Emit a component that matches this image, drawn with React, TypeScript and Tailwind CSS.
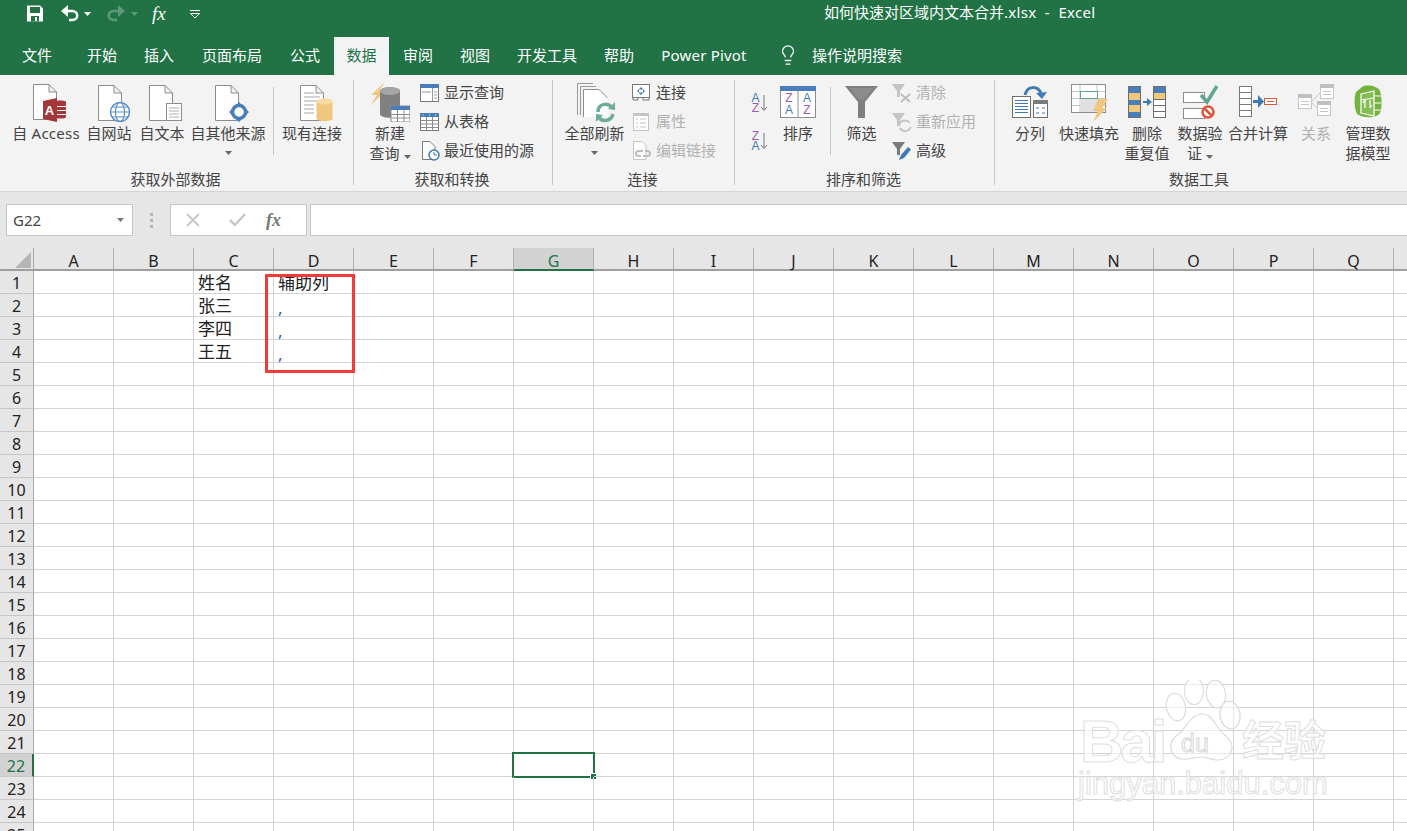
import React from 'react';
import { Lightbulb } from 'lucide-react';

const Page = ({ x = 0, y = 0, w = 24, h = 36, fill = '#fff', stroke = '#8c8c8c' }: { x?: number; y?: number; w?: number; h?: number; fill?: string; stroke?: string }) => (
  <path
    d={`M${x + 0.5} ${y + 0.5}H${x + w - 8}L${x + w - 0.5} ${y + 8}V${y + h - 0.5}H${x + 0.5}Z M${x + w - 8} ${y + 0.5}V${y + 8}H${x + w - 0.5}`}
    fill={fill}
    stroke={stroke}
  />
);

const Caret = ({ color = '#666' }: { color?: string }) => (
  <svg width="7" height="4" viewBox="0 0 7 4" className="inline-block">
    <path d="M0 0H7L3.5 4Z" fill={color} />
  </svg>
);

/* big ribbon icons: all 38px tall, drawn from y=84 of the page */
const AccessIcon = () => (
  <svg width="34" height="38" viewBox="0 0 34 38">
    <Page />
    <path d="M22 18C22 16 33 16 33 18V33C33 35 22 35 22 33Z" fill="#a4373a" />
    <path d="M23 22.5H33M23 26.5H33M23 30.5H33" stroke="#fff" />
    <path d="M10 17L24 14V38L10 35Z" fill="#a4373a" />
    <text x="16.5" y="31" fontSize="13" fontWeight="700" fill="#fff" textAnchor="middle" fontFamily="Liberation Sans">A</text>
  </svg>
);

const WebIcon = () => (
  <svg width="32" height="38" viewBox="0 0 32 38">
    <Page y={1} />
    <circle cx="22" cy="28" r="9.5" fill="#fff" stroke="#5b8fc9" strokeWidth="1.5" />
    <ellipse cx="22" cy="28" rx="4.5" ry="9.5" fill="none" stroke="#5b8fc9" strokeWidth="1.2" />
    <path d="M12.5 28H31.5M14 23H30M14 33H30" stroke="#5b8fc9" strokeWidth="1.2" />
  </svg>
);

const TextIcon = () => (
  <svg width="33" height="38" viewBox="0 0 33 38">
    <Page y={1} />
    <rect x="17.5" y="19.5" width="15" height="17" fill="#fff" stroke="#8c8c8c" />
    <path d="M20 24H30M20 27H30M20 30H30M20 33H30" stroke="#b0b0b0" />
  </svg>
);

const OtherIcon = () => (
  <svg width="34" height="38" viewBox="0 0 34 38">
    <Page y={1} />
    <circle cx="24" cy="28" r="6.5" fill="#fff" stroke="#4a7ebb" strokeWidth="3.5" />
    <path d="M24 18L27 21H21ZM24 38L27 35H21ZM14 28L17 25V31ZM34 28L31 25V31Z" fill="#4a7ebb" />
  </svg>
);

const ExistingIcon = () => (
  <svg width="33" height="38" viewBox="0 0 33 38">
    <Page y={1} />
    <path d="M4 9H14M4 13H20M4 17H20M4 21H14M4 25H14M4 29H14" stroke="#a8a8a8" />
    <path d="M16.500 17.500C16.500 14 32.500 14 32.500 17.500V34.500C32.500 38 16.500 38 16.500 34.500Z" fill="#f0c77e" />
    <ellipse cx="24.500" cy="17.500" rx="8" ry="3" fill="#f7dca6" />
  </svg>
);

const QueryIcon = () => (
  <svg width="40" height="40" viewBox="0 0 40 40">
    <path d="M15 0L1 13L7 13L0 24L14 10L9 9Z" fill="#f0c77e" />
    <path d="M10 9C10 4 30 4 30 9V32C30 37 10 37 10 32Z" fill="#808080" />
    <ellipse cx="20" cy="9" rx="10" ry="4" fill="#a6a6a6" />
    <rect x="21" y="24" width="19" height="16" fill="#fff" stroke="#8c8c8c" />
    <rect x="21" y="24" width="19" height="4" fill="#4a7ebb" />
    <path d="M21 32.500H40M21 36H40M27.500 28V40M34 28V40" stroke="#8c8c8c" />
  </svg>
);

const RefreshIcon = () => (
  <svg width="39" height="40" viewBox="0 0 39 40">
    <path d="M.5 32V.5H16" fill="none" stroke="#9a9a9a" />
    <path d="M3.500 32V3.500H19" fill="none" stroke="#9a9a9a" />
    <path d="M6.500 34V6.500H22L30.500 15V34Z" fill="#fff" />
    <path d="M6.500 34V6.500H22L30.500 15" fill="none" stroke="#8c8c8c" />
    <g transform="translate(0 3)">
      <path d="M21 26C21 17 32 16 35 22M36 28C34 36 24 36 22 31" fill="none" stroke="#6fae95" strokeWidth="3.500" />
      <path d="M31 23L38 24V16ZM26 29L19 28V36Z" fill="#6fae95" />
    </g>
  </svg>
);

const SortIcon = () => (
  <svg width="36" height="38" viewBox="0 0 36 38" fontFamily="Liberation Sans">
    <rect x="0.500" y="2.500" width="35" height="31" fill="#fff" stroke="#8c8c8c" />
    <rect x="0" y="2" width="36" height="5" fill="#4a7ebb" />
    <path d="M18 7V33" stroke="#8c8c8c" />
    <text x="9" y="18" fontSize="12" fill="#9a5cb4" textAnchor="middle">Z</text>
    <text x="9" y="30" fontSize="12" fill="#3f7ab5" textAnchor="middle">A</text>
    <text x="27" y="18" fontSize="12" fill="#3f7ab5" textAnchor="middle">A</text>
    <text x="27" y="30" fontSize="12" fill="#9a5cb4" textAnchor="middle">Z</text>
  </svg>
);

const FunnelIcon = () => (
  <svg width="33" height="38" viewBox="0 0 33 38">
    <path d="M0 2H33L20 18V34H13V18Z" fill="#808080" />
    <path d="M5 4H28L18 16H15Z" fill="#8c8c8c" />
  </svg>
);

const SplitIcon = () => (
  <svg width="37" height="38" viewBox="0 0 37 38">
    <path d="M13 11C15 2 25 1 29 9" fill="none" stroke="#3f7ab5" strokeWidth="3" />
    <path d="M24 9L35 8L30 15Z" fill="#3f7ab5" />
    <rect x="0.500" y="12.500" width="18" height="21" fill="#fff" stroke="#6d6d6d" />
    <path d="M3 16.500H16M3 19.500H16M3 22.500H16M3 25.500H16M3 28.500H16" stroke="#3f7ab5" />
    <rect x="21.500" y="16.500" width="14" height="17" fill="#fff" stroke="#6d6d6d" />
    <rect x="21" y="16" width="15" height="4" fill="#7a7a7a" />
    <path d="M24 24H27M30 24H33M24 29H27M30 29H33" stroke="#3f7ab5" />
  </svg>
);

const FlashIcon = () => (
  <svg width="37" height="38" viewBox="0 0 37 38">
    <rect x="0.500" y="0.500" width="34" height="28" fill="#fff" stroke="#8c8c8c" />
    <path d="M9 1V28M26 1V28M1 7.500H34M1 14.500H34M1 21.500H34" stroke="#c6c6c6" />
    <rect x="9.500" y="7.500" width="17" height="7" fill="#fff" stroke="#5fa68a" />
    <rect x="9.500" y="15" width="16" height="13" fill="#e0e0e0" />
    <path d="M27 15H37L31 24H36L22 38L27 27H22Z" fill="#f0c77e" />
  </svg>
);

const DedupIcon = () => (
  <svg width="38" height="38" viewBox="0 0 38 38">
    <rect x="0.500" y="2.500" width="12" height="31" fill="#4a7ebb" stroke="#6d6d6d" />
    <rect x="1" y="9" width="11" height="7" fill="#f0c77e" />
    <rect x="1" y="21" width="11" height="7" fill="#f0c77e" />
    <rect x="25.500" y="2.500" width="12" height="31" fill="#fff" stroke="#6d6d6d" />
    <rect x="26" y="3" width="11" height="6" fill="#4a7ebb" />
    <rect x="26" y="9" width="11" height="6" fill="#f0c77e" />
    <path d="M26 15.500H37M26 21.500H37M26 27.500H37" stroke="#6d6d6d" />
    <path d="M15 18H20" stroke="#3f7ab5" strokeWidth="2" />
    <path d="M19 14L24 18L19 22Z" fill="#3f7ab5" />
  </svg>
);

const ValidateIcon = () => (
  <svg width="35" height="38" viewBox="0 0 35 38">
    <rect x="0.500" y="8.500" width="21" height="10" fill="#fff" stroke="#8c8c8c" />
    <rect x="0.500" y="24.500" width="21" height="10" fill="#fff" stroke="#8c8c8c" />
    <path d="M18 11L24 18L34 2" fill="none" stroke="#5fa68a" strokeWidth="3.500" />
    <circle cx="25" cy="28" r="5.500" fill="#fff" stroke="#d9583b" strokeWidth="2.500" />
    <path d="M21 24L29 32" stroke="#d9583b" strokeWidth="2.500" />
  </svg>
);

const ConsolidateIcon = () => (
  <svg width="38" height="38" viewBox="0 0 38 38">
    <rect x="0.500" y="2.500" width="12" height="30" fill="#fff" stroke="#7a7a7a" />
    <path d="M1 8.500H12M1 14.500H12M1 20.500H12M1 26.500H12" stroke="#7a7a7a" />
    <path d="M14 17.500H21" stroke="#3f7ab5" strokeWidth="3" />
    <path d="M19 11L25 17.500L19 24Z" fill="#3f7ab5" />
    <rect x="25.500" y="14.500" width="12" height="6" fill="#fff" stroke="#d9583b" />
    <path d="M28 17.500H35" stroke="#d9583b" />
  </svg>
);

const RelationIcon = () => (
  <svg width="36" height="38" viewBox="0 0 36 38">
    <path d="M13 18L23 8M13 18L22 27" stroke="#c6c6c6" />
    <g fill="#fff" stroke="#c8c4c8">
      <rect x="0.500" y="10.500" width="13" height="14" />
      <rect x="22.500" y="0.500" width="13" height="14" />
      <rect x="19.500" y="17.500" width="13" height="14" />
    </g>
    <g fill="#c2bec2">
      <rect x="0" y="10" width="14" height="4" />
      <rect x="22" y="0" width="14" height="4" />
      <rect x="19" y="17" width="14" height="4" />
    </g>
    <path d="M3 17.500H11M3 20.500H11M25 7.500H33M25 10.500H33M22 24.500H30M22 27.500H30" stroke="#c8c4c8" />
  </svg>
);

const ModelIcon = () => (
  <svg width="28" height="38" viewBox="0 0 28 38">
    <path d="M8 3C12 0 24 2 26 7C28 14 28 24 26 29C22 35 8 34 3 30C0 25 0 12 2 8Z" fill="#74b33e" />
    <path d="M7 10L20 7V32L7 29Z" fill="#fff" fillOpacity="0.12" stroke="#fff" strokeWidth="1.200" />
    <path d="M20 12H27M20 19H27M20 26H27M7 16L20 14" stroke="#fff" />
    <path d="M11 16V24M11 16L9 19M16 24V16M16 24L18 21" fill="none" stroke="#fff" strokeWidth="1.200" />
  </svg>
);

/* small ribbon icons, 20x20 */
const ShowQueryIcon = () => (
  <svg width="20" height="20" viewBox="0 0 20 20">
    <rect x="0.500" y="1.500" width="18" height="17" fill="#fff" stroke="#7a7a7a" />
    <rect x="0" y="1" width="19" height="4" fill="#4a7ebb" />
    <path d="M12.500 5V18M2 9H11M14 9H17M14 12H17M14 15H17" stroke="#9a9a9a" />
  </svg>
);

const FromTableIcon = () => (
  <svg width="20" height="20" viewBox="0 0 20 20">
    <rect x="0.500" y="1.500" width="18" height="17" fill="#fff" stroke="#7a7a7a" />
    <rect x="0" y="1" width="19" height="4" fill="#4a7ebb" />
    <path d="M1 8.500H18M1 12H18M1 15.500H18M6.500 5V18M12.500 5V18" stroke="#8c8c8c" />
    <path d="M3 2.500V3.500M9.500 2.500V3.500M15.500 2.500V3.500" stroke="#fff" />
  </svg>
);

const RecentIcon = () => (
  <svg width="20" height="20" viewBox="0 0 20 20">
    <path d="M2.500 .5H10L15 5.500V18.500H2.500Z" fill="#fff" stroke="#7a7a7a" />
    <circle cx="14" cy="14" r="5" fill="#fff" stroke="#3f7ab5" strokeWidth="1.500" />
    <path d="M14 11V14H17" fill="none" stroke="#3f7ab5" />
  </svg>
);

const ConnIcon = () => (
  <svg width="20" height="20" viewBox="0 0 20 20">
    <rect x="0.500" y="1.500" width="17" height="13" fill="#fff" stroke="#7a7a7a" />
    <path d="M9 4L11.500 6.500H6.500ZM9 12L11.500 9.500H6.500ZM5 8L7 6V10ZM13 8L11 6V10Z" fill="#4a7ebb" />
    <path d="M1 15V17H6V15M11 15V17H17V15" fill="none" stroke="#7a7a7a" />
  </svg>
);

const PropsIcon = () => (
  <svg width="20" height="20" viewBox="0 0 20 20">
    <rect x="1.500" y="1.500" width="15" height="17" fill="#fff" stroke="#c4c4c4" />
    <rect x="1" y="1" width="16" height="3" fill="#c4c4c4" />
    <path d="M4 7H6M8 7H14M4 11H6M8 11H14M4 15H6M8 15H14" stroke="#c4c4c4" />
  </svg>
);

const EditLinkIcon = () => (
  <svg width="20" height="20" viewBox="0 0 20 20">
    <path d="M1.500 .5H10L14 4.500V18.500H1.500Z" fill="#fff" stroke="#c4c4c4" />
    <path d="M9 15H6.500A2.500 2.500 0 0 1 6.500 10H11M11 15H15.500A2.500 2.500 0 0 0 15.500 10H13" fill="none" stroke="#bdbdbd" strokeWidth="2" />
  </svg>
);

const SortSmall = ({ top, bottom, topColor, bottomColor }: { top: string; bottom: string; topColor: string; bottomColor: string }) => (
  <svg width="18" height="20" viewBox="0 0 18 20" fontFamily="Liberation Sans" fontWeight="400" className="overflow-visible">
    <text x="5.500" y="9" fontSize="12" fill={topColor} textAnchor="middle">{top}</text>
    <text x="5.500" y="19" fontSize="12" fill={bottomColor} textAnchor="middle">{bottom}</text>
    <path d="M14 2V17M11 14L14 17.500L17 14" fill="none" stroke="#777" />
  </svg>
);

const SmallFunnel = ({ color = '#c4c4c4' }: { color?: string }) => (
  <path d="M0 1H13L8 8V14H5V8Z" fill={color} />
);

const ClearIcon = () => (
  <svg width="20" height="20" viewBox="0 0 20 20">
    <SmallFunnel />
    <path d="M9 11L18 19M18 11L9 19" stroke="#bdbdbd" strokeWidth="2" />
  </svg>
);

const ReapplyIcon = () => (
  <svg width="20" height="20" viewBox="0 0 20 20">
    <SmallFunnel />
    <path d="M7 14C7 8 15 7 18 11M19 15C17 20 10 20 8 16" fill="none" stroke="#c4c4c4" strokeWidth="2" />
  </svg>
);

const AdvancedIcon = () => (
  <svg width="20" height="20" viewBox="0 0 20 20">
    <SmallFunnel color="#7a7a7a" />
    <path d="M7 19L9 14L16 6L19 8.500L12 17Z" fill="#3f7ab5" />
  </svg>
);

const BigButton = ({ w, icon, lines, caret, disabled, iconClass = '' }: { w: string; icon: React.ReactNode; lines: string[]; caret?: 'inline' | 'below'; disabled?: boolean; iconClass?: string }) => (
  <div className={`flex shrink-0 flex-col items-center pt-[9px] ${w}`}>
    <div className={`flex h-[39px] items-start justify-center ${iconClass}`}>{icon}</div>
    {lines.map((line, i) => (
      <div key={line} className={`whitespace-nowrap leading-[20px] ${disabled ? 'text-[#b1b1b1]' : 'text-[#444]'}`}>
        {line}
        {caret === 'inline' && i === lines.length - 1 && (
          <span className="ml-[4px] align-middle">
            <Caret />
          </span>
        )}
      </div>
    ))}
    {caret === 'below' && (
      <div className="flex h-[20px] items-center">
        <Caret />
      </div>
    )}
  </div>
);

const SmallButton = ({ icon, label, disabled }: { icon: React.ReactNode; label: string; disabled?: boolean }) => (
  <div className="flex h-[29px] items-center gap-[4px]">
    <div className="flex w-[20px] justify-center">{icon}</div>
    <span className={`whitespace-nowrap ${disabled ? 'text-[#b1b1b1]' : 'text-[#444]'}`}>{label}</span>
  </div>
);

const Group = ({ w, label, children, last }: { w: string; label: string; children: React.ReactNode; last?: boolean }) => (
  <div className={`flex shrink-0 ${w}`}>
    <div className="flex min-w-0 flex-1 flex-col">
      <div className="flex h-[94px]">{children}</div>
      <div className={`h-[20px] text-center leading-[20px] text-[#444] ${last ? 'pr-[4px]' : 'pr-[2px]'}`}>{label}</div>
    </div>
    {!last && <div className="mt-[5px] h-[105px] w-px bg-[#c6c6c6]" />}
  </div>
);

const tabs = [
  { label: '文件', w: 'w-[74px]' },
  { label: '开始', w: 'w-[56px]' },
  { label: '插入', w: 'w-[58px]' },
  { label: '页面布局', w: 'w-[88px]' },
  { label: '公式', w: 'w-[58px]' },
  { label: '数据', w: 'w-[55px]', active: true },
  { label: '审阅', w: 'w-[58px]' },
  { label: '视图', w: 'w-[56px]' },
  { label: '开发工具', w: 'w-[88px]' },
  { label: '帮助', w: 'w-[56px]' },
  { label: 'Power Pivot', w: 'w-[114px] tracking-[0.2px]' },
];

const columns = 'ABCDEFGHIJKLMNOPQ'.split('');
const rows = Array.from({ length: 25 }, (_, i) => i + 1);
const cells: Record<string, string> = {
  C1: '姓名',
  D1: '辅助列',
  C2: '张三',
  C3: '李四',
  C4: '王五',
  D2: ',',
  D3: ',',
  D4: ',',
};

const Watermark = () => (
  <div className="pointer-events-none absolute left-[1078px] top-[432px] h-[125px] w-[256px] font-['Liberation_Sans',sans-serif]">
    <span className="absolute left-[2px] top-[27px] text-[60px] font-bold leading-[70px] tracking-[-3px] text-white/60 [-webkit-text-stroke:1px_#dedede]">Bai</span>
    <svg width="78" height="82" viewBox="0 0 78 82" className="absolute left-[86px] top-0">
      <g fill="#ffffff" fillOpacity="0.5" stroke="#dcdcdc" strokeWidth="1.200">
        <ellipse cx="12" cy="27" rx="9.500" ry="14" transform="rotate(-12 12 27)" />
        <ellipse cx="30" cy="11" rx="9.500" ry="13.500" />
        <ellipse cx="52" cy="14" rx="9.500" ry="14" transform="rotate(-8 52 14)" />
        <ellipse cx="66" cy="35" rx="10" ry="14" transform="rotate(-8 66 35)" />
        <path d="M38 34C50 34 52 50 62 56C74 66 66 80 54 80C46 80 44 77 38 77C30 77 26 80 18 79C6 77 3 64 12 56C22 50 26 34 38 34Z" />
      </g>
    </svg>
    <span className="absolute left-[103px] top-[48px] text-[25px] leading-[30px] text-white/60 [-webkit-text-stroke:1px_#d4d4d4]">du</span>
    <span className="absolute left-[164px] top-[30px] font-['Noto_Sans_CJK_SC',sans-serif] text-[42px] font-bold leading-[56px] text-white/60 [-webkit-text-stroke:1px_#dedede]">经验</span>
    <span className="absolute left-0 top-[86px] text-[31px] leading-[36px] text-white/60 [-webkit-text-stroke:1px_#e0e0e0]">jingyan.baidu.com</span>
  </div>
);

export default function App() {
  return (
    <div className="flex h-screen w-full flex-col overflow-hidden bg-white font-['Noto_Sans','Noto_Sans_CJK_SC',sans-serif] text-[15px]">
      {/* title bar */}
      <div className="flex h-[37px] shrink-0 items-center bg-[#217346] pb-[10px] pl-[27px] text-white">
        <svg width="16" height="17" viewBox="0 0 16 17">
          <path d="M0 .5H13L16 3.500V16.500H0Z" fill="#fff" />
          <rect x="3" y="2" width="10" height="6" fill="#217346" />
          <rect x="4" y="11" width="8" height="5.500" fill="#217346" />
          <rect x="8" y="12" width="2" height="4" fill="#fff" />
        </svg>
        <svg width="18" height="17" viewBox="0 0 18 17" className="ml-[18px]">
          <path d="M2 6H11C18 6 18 15 11 15H8" fill="none" stroke="#fff" strokeWidth="2.400" />
          <path d="M7 0V12L0 6Z" fill="#fff" />
        </svg>
        <span className="ml-[5px] flex">
          <Caret color="#fff" />
        </span>
        <svg width="18" height="17" viewBox="0 0 18 17" className="ml-[16px]">
          <path d="M16 6H7C0 6 0 15 7 15H10" fill="none" stroke="#5d9a7c" strokeWidth="2.400" />
          <path d="M11 0V12L18 6Z" fill="#5d9a7c" />
        </svg>
        <span className="ml-[6px] flex">
          <Caret color="#5d9a7c" />
        </span>
        <span className="ml-[14px] w-[18px] font-['Liberation_Serif',serif] text-[19px] italic leading-[20px]">fx</span>
        <svg width="12" height="10" viewBox="0 0 12 10" className="ml-[19px]">
          <path d="M1 1.500H11" stroke="#fff" />
          <path d="M1.500 4.500H10.500L6 9Z" fill="none" stroke="#fff" />
        </svg>
        <span className="mb-[3px] ml-[623px] whitespace-nowrap leading-[20px]">
          如何快速对区域内文本合并<span className="tracking-[0.3px]">.xlsx&nbsp;&nbsp;-&nbsp;&nbsp;Excel</span>
        </span>
      </div>

      {/* tabs */}
      <div className="flex h-[38px] shrink-0 items-stretch bg-[#217346] text-white">
        {tabs.map((tab) => (
          <div
            key={tab.label}
            className={`flex shrink-0 items-center justify-center pb-[2px] ${tab.w} ${tab.active ? 'bg-[#f3f3f3] text-[#217346]' : ''}`}
          >
            {tab.label}
          </div>
        ))}
        <div className="ml-[16px] flex items-center gap-[13px] pb-[2px]">
          <Lightbulb size={22} strokeWidth={1.4} />
          <span className="whitespace-nowrap">操作说明搜索</span>
        </div>
      </div>

      {/* ribbon */}
      <div className="flex h-[117px] shrink-0 border-b border-[#d4d4d4] bg-[#f3f3f3]">
        <Group w="w-[354px]" label="获取外部数据">
          <div className="ml-[10px]" />
          <BigButton w="w-[72px] tracking-[0.25px]" iconClass="ml-[8px]" icon={<AccessIcon />} lines={['自 Access']} />
          <BigButton w="w-[54px]" iconClass="ml-[10px]" icon={<WebIcon />} lines={['自网站']} />
          <BigButton w="w-[52px]" iconClass="ml-[7px]" icon={<TextIcon />} lines={['自文本']} />
          <BigButton w="w-[80px]" iconClass="ml-[7px]" icon={<OtherIcon />} lines={['自其他来源']} caret="below" />
          <div className="ml-[5px] mr-[1px] mt-[12px] h-[68px] w-px bg-[#c6c6c6]" />
          <BigButton w="w-[74px]" iconClass="ml-[9px]" icon={<ExistingIcon />} lines={['现有连接']} />
        </Group>
        <Group w="w-[199px]" label="获取和转换">
          <div className="ml-[6px]" />
          <BigButton w="w-[60px]" iconClass="-mt-[2px] mb-[2px]" icon={<QueryIcon />} lines={['新建', '查询']} caret="inline" />
          <div className="pt-[3px]">
            <SmallButton icon={<ShowQueryIcon />} label="显示查询" />
            <SmallButton icon={<FromTableIcon />} label="从表格" />
            <SmallButton icon={<RecentIcon />} label="最近使用的源" />
          </div>
        </Group>
        <Group w="w-[182px]" label="连接">
          <div className="ml-[4px]" />
          <BigButton w="w-[75px]" iconClass="-mt-[1px] mb-[1px] ml-[4px]" icon={<RefreshIcon />} lines={['全部刷新']} caret="below" />
          <div className="pt-[3px]">
            <SmallButton icon={<ConnIcon />} label="连接" />
            <SmallButton icon={<PropsIcon />} label="属性" disabled />
            <SmallButton icon={<EditLinkIcon />} label="编辑链接" disabled />
          </div>
        </Group>
        <Group w="w-[260px]" label="排序和筛选">
          <div className="ml-[15px] flex w-[24px] flex-col gap-[18px] pt-[18px]">
            <SortSmall top="A" bottom="Z" topColor="#3f7ab5" bottomColor="#9a5cb4" />
            <SortSmall top="Z" bottom="A" topColor="#9a5cb4" bottomColor="#3f7ab5" />
          </div>
          <BigButton w="w-[48px]" icon={<SortIcon />} lines={['排序']} />
          <div className="ml-[8px] mt-[12px] h-[68px] w-px bg-[#c6c6c6]" />
          <BigButton w="w-[61px]" icon={<FunnelIcon />} lines={['筛选']} />
          <div className="pt-[3px]">
            <SmallButton icon={<ClearIcon />} label="清除" disabled />
            <SmallButton icon={<ReapplyIcon />} label="重新应用" disabled />
            <SmallButton icon={<AdvancedIcon />} label="高级" />
          </div>
        </Group>
        <Group w="flex-1" label="数据工具" last>
          <div className="ml-[10px]" />
          <BigButton w="w-[50px]" icon={<SplitIcon />} lines={['分列']} />
          <BigButton w="w-[68px]" icon={<FlashIcon />} lines={['快速填充']} />
          <BigButton w="w-[48px]" icon={<DedupIcon />} lines={['删除', '重复值']} />
          <BigButton w="w-[58px]" icon={<ValidateIcon />} lines={['数据验', '证']} caret="inline" />
          <BigButton w="w-[58px]" icon={<ConsolidateIcon />} lines={['合并计算']} />
          <BigButton w="w-[58px]" icon={<RelationIcon />} lines={['关系']} disabled />
          <BigButton w="w-[46px]" icon={<ModelIcon />} lines={['管理数', '据模型']} />
        </Group>
      </div>

      {/* formula bar */}
      <div className="flex h-[56px] shrink-0 items-center bg-[#e6e6e6] pl-[6px]">
        <div className="flex h-[32px] w-[127px] items-center justify-between border border-[#c6c6c6] bg-white pl-[6px] pr-[8px] text-[#444]">
          <span>G22</span>
          <Caret color="#777" />
        </div>
        <div className="ml-[17px] flex w-[3px] flex-col gap-[3px]">
          <span className="h-[3px] w-[3px] bg-[#b4b4b4]" />
          <span className="h-[3px] w-[3px] bg-[#b4b4b4]" />
          <span className="h-[3px] w-[3px] bg-[#b4b4b4]" />
        </div>
        <div className="ml-[17px] flex h-[32px] w-[137px] items-center border border-[#c6c6c6] bg-white">
          <svg width="14" height="14" viewBox="0 0 14 14" className="ml-[15px]">
            <path d="M1 1L13 13M13 1L1 13" stroke="#c8c8c8" strokeWidth="2" />
          </svg>
          <svg width="17" height="14" viewBox="0 0 17 14" className="ml-[29px]">
            <path d="M1 7L6 12L16 1" fill="none" stroke="#c8c8c8" strokeWidth="2.500" />
          </svg>
          <span className="ml-[20px] font-['Liberation_Serif',serif] text-[18px] font-bold italic leading-[20px] text-[#777]">fx</span>
        </div>
        <div className="ml-[3px] h-[32px] flex-1 border-y border-l border-[#c6c6c6] bg-white" />
      </div>

      {/* sheet */}
      <div className="relative flex-1 overflow-hidden">
        <div className="grid w-max grid-cols-[34px_repeat(18,80px)] auto-rows-[23px] text-[17px] leading-[24px] text-[#222]">
          <div className="relative border-r border-b-2 border-r-[#a8a8a8] border-b-[#9f9f9f] bg-[#e6e6e6]">
            <svg width="16" height="16" viewBox="0 0 16 16" className="absolute left-[15px] top-[4px]">
              <path d="M16 0V16H0Z" fill="#b5b5b5" />
            </svg>
          </div>
          {columns.map((col) =>
            col === 'G' ? (
              <div key={col} className="border-r border-b-2 border-r-[#b0b0b0] border-b-[#217346] bg-[#d2d2d2] text-center text-[16px] leading-[26px] text-[#217346]">
                {col}
              </div>
            ) : (
              <div key={col} className="border-r border-b-2 border-r-[#b0b0b0] border-b-[#9f9f9f] bg-[#e6e6e6] text-center text-[16px] leading-[26px]">
                {col}
              </div>
            ),
          )}
          <div className="border-b-2 border-b-[#9f9f9f] bg-[#e6e6e6]" />
          {rows.map((row) => (
            <React.Fragment key={row}>
              {row === 22 ? (
                <div className="border-b border-r-2 border-b-[#c6c6c6] border-r-[#217346] bg-[#d2d2d2] text-center text-[16px] text-[#217346]">{row}</div>
              ) : (
                <div className="border-b border-r border-b-[#c6c6c6] border-r-[#a8a8a8] bg-[#e6e6e6] text-center text-[16px]">{row}</div>
              )}
              {columns.map((col) => {
                const value = cells[col + row];
                return (
                  <div
                    key={col}
                    className={`relative whitespace-nowrap border-b border-r border-[#d4d4d4] pl-[4px] ${value === ',' ? 'pt-[2px] text-[#2f5fb5]' : ''}`}
                  >
                    {value}
                    {col === 'G' && row === 22 && (
                      <div className="absolute -left-[2px] -top-[2px] h-[26px] w-[83px] border-2 border-[#217346]">
                        <span className="absolute -bottom-[4px] -right-[4px] h-[7px] w-[7px] border border-white bg-[#217346]" />
                      </div>
                    )}
                  </div>
                );
              })}
              <div className="border-b border-[#d4d4d4]" />
            </React.Fragment>
          ))}
        </div>
        <div className="pointer-events-none absolute left-[265px] top-[26px] h-[99px] w-[90px] border-[3px] border-[#f53a3a]" />
        <Watermark />
      </div>
    </div>
  );
}
